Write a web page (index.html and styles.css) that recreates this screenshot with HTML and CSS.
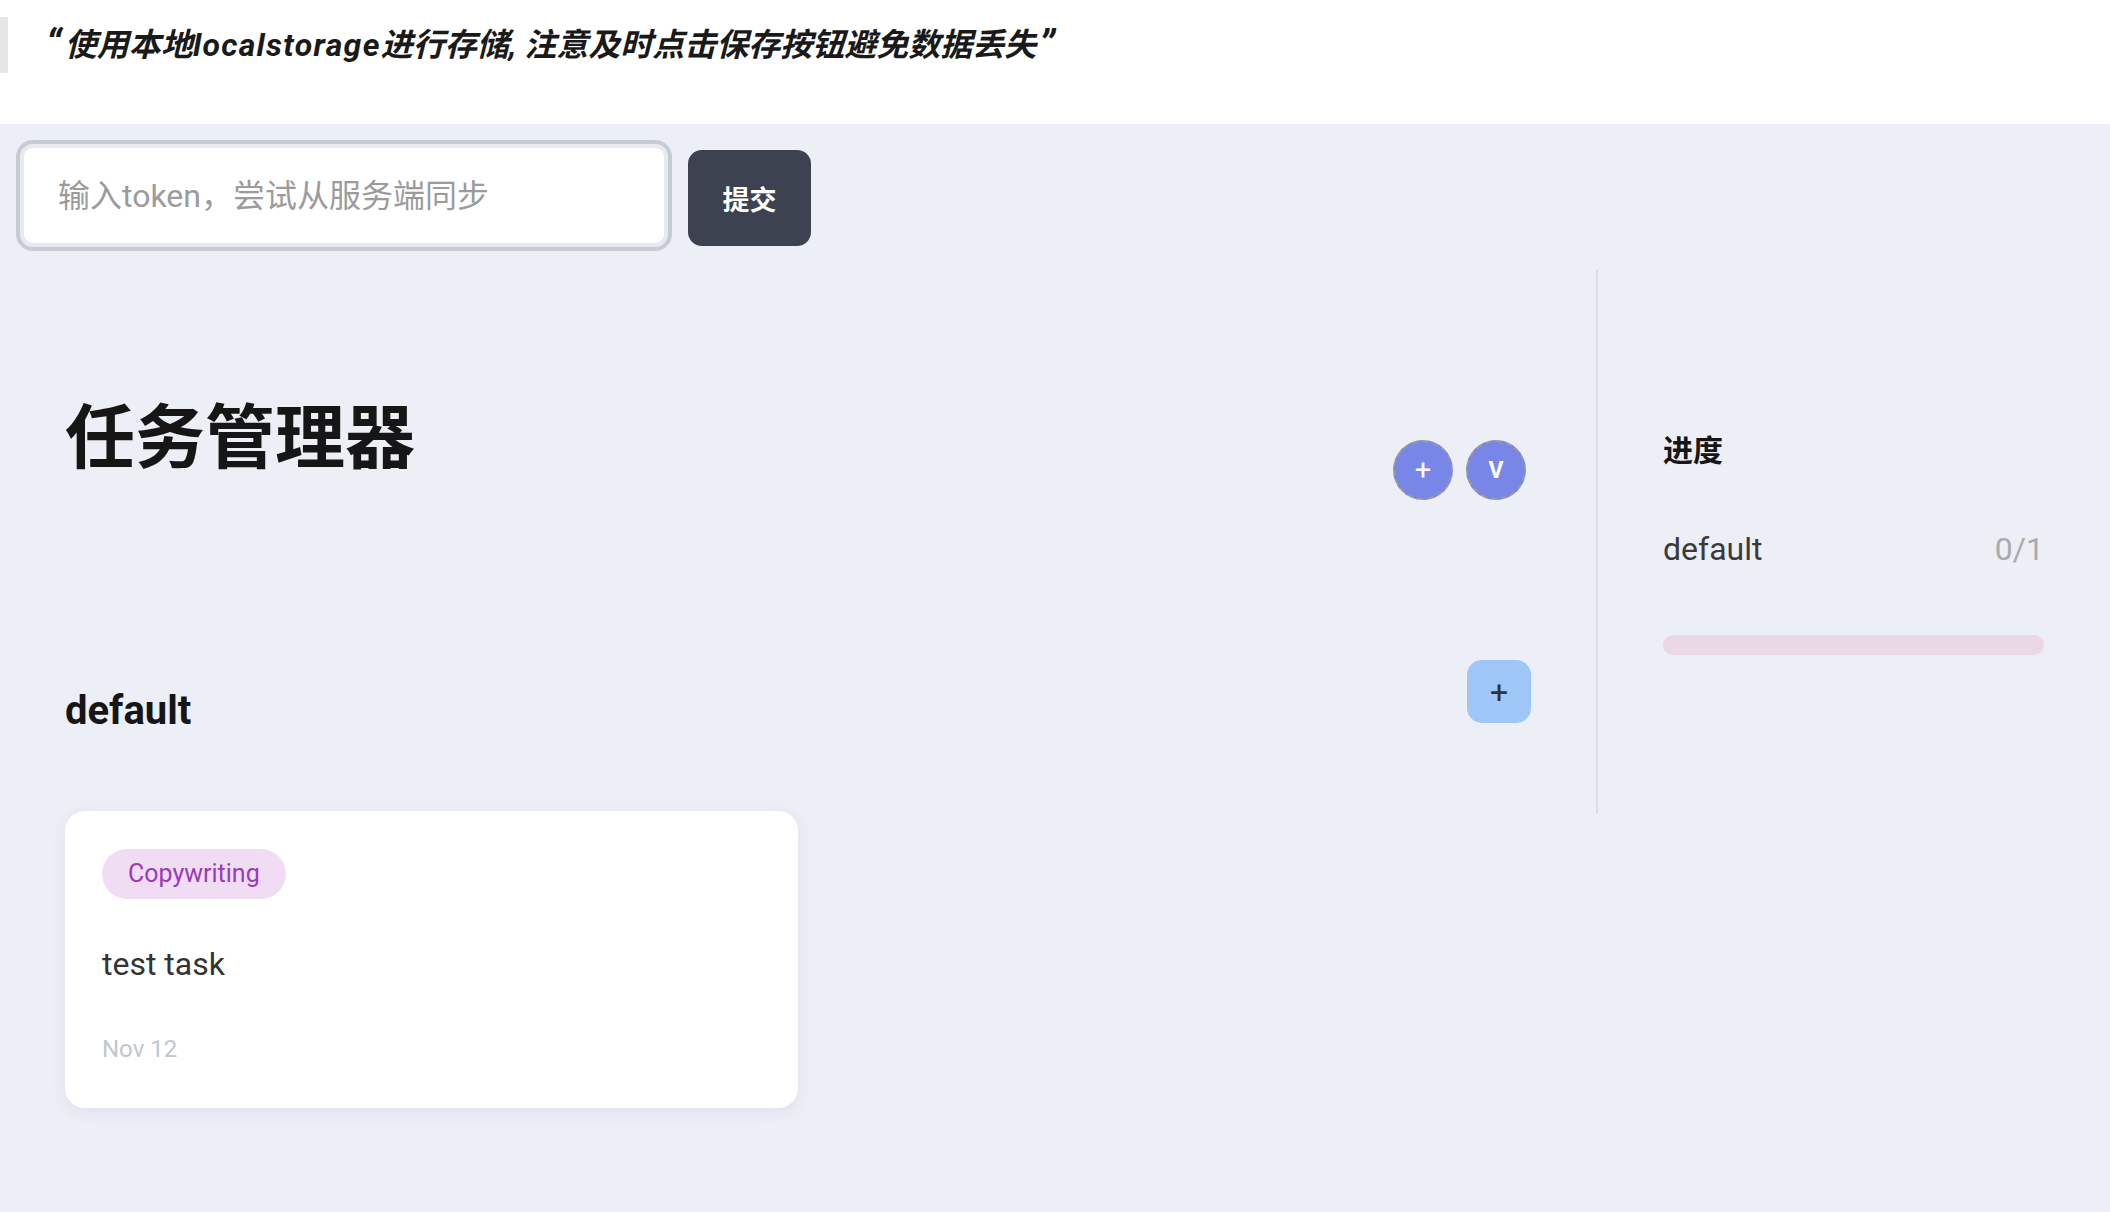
FILE: index.html
```html
<!DOCTYPE html>
<html lang="zh-CN">
<head>
<meta charset="utf-8">
<title>任务管理器</title>
<link rel="stylesheet" href="styles.css">
</head>
<body>
<header class="notice">
  <blockquote class="quote"><span class="q q-open">“</span>使用本地<span class="latin">localstorage</span>进行存储, 注意及时点击保存按钮避免数据丢失<span class="q q-close">”</span></blockquote>
</header>
<main class="app">
  <div class="sync">
    <input class="token-input" type="text" placeholder="输入token，尝试从服务端同步">
    <button class="submit" type="button">提交</button>
  </div>
  <div class="layout">
    <section class="board">
      <div class="board-head">
        <h1 class="title">任务管理器</h1>
        <div class="actions">
          <button class="circle circle-plus" type="button">+</button>
          <button class="circle" type="button">V</button>
        </div>
      </div>
      <div class="group-head">
        <h2 class="group-title">default</h2>
        <button class="add" type="button">+</button>
      </div>
      <div class="cards">
        <article class="card">
          <span class="tag">Copywriting</span>
          <p class="task">test task</p>
          <p class="date">Nov 12</p>
        </article>
      </div>
    </section>
    <aside class="progress">
      <h3 class="progress-title">进度</h3>
      <div class="progress-row">
        <span class="progress-name">default</span>
        <span class="progress-count">0/1</span>
      </div>
      <div class="bar"></div>
    </aside>
  </div>
</main>
</body>
</html>
```
FILE: styles.css
```css
* { box-sizing: border-box; }
html, body { margin: 0; padding: 0; }
body {
  font-family: Roboto, "Noto Sans CJK SC", sans-serif;
  background: #eceff6;
  color: #222;
  min-height: 1212px;
}
.notice {
  background: #fff;
  height: 124px;
  padding-top: 17px;
}
.quote {
  margin: 0;
  height: 56px;
  line-height: 56px;
  border-left: 8px solid #e6e6e6;
  padding-left: 32px;
  font-size: 32px;
  font-weight: 700;
  font-style: italic;
  color: #1a1a1a;
  white-space: nowrap;
}
.q {
  font-size: 40px;
  line-height: 0;
  vertical-align: -2px;
}
.q-open { margin-left: 6px; margin-right: 3px; }
.q-close { margin-left: 3px; }
.latin { letter-spacing: 1.3px; }
.app { background: #eceff6; }
.sync {
  display: flex;
  align-items: center;
  gap: 16px;
  padding: 16px 0 0 16px;
}
.token-input {
  width: 656px;
  height: 111px;
  border: 4px solid #c7cbd4;
  border-radius: 17px;
  box-shadow: inset 0 0 0 4px #e7eaf1;
  background: #fff;
  padding: 0 0 0 38px;
  font-family: Roboto, "Noto Sans CJK SC", sans-serif;
  font-size: 32px;
  color: #333;
  outline: none;
}
.token-input::placeholder { color: #9b9b9b; }
.submit {
  width: 123px;
  height: 96px;
  margin-top: 5px;
  border: none;
  border-radius: 14px;
  background: #3c4250;
  color: #fff;
  font-family: "Noto Sans CJK SC", sans-serif;
  font-size: 27px;
  font-weight: 700;
}
.layout {
  display: flex;
  margin-top: 19px;
}
.board {
  flex: 1;
  padding: 121px 65px 0 65px;
}
.board-head {
  display: flex;
  justify-content: space-between;
  align-items: flex-start;
}
.title {
  margin: 0;
  font-family: "Noto Sans CJK SC", sans-serif;
  font-size: 70px;
  line-height: 84px;
  font-weight: 700;
  color: #161616;
}
.actions {
  display: flex;
  gap: 13px;
  margin-top: 49px;
  margin-right: 5px;
}
.circle {
  width: 60px;
  height: 60px;
  border-radius: 50%;
  border: 2px dashed #9a9a9a;
  background: #7887e7;
  color: #fff;
  font-family: Roboto, sans-serif;
  font-size: 23px;
  font-weight: 700;
  padding: 0;
  display: flex;
  align-items: center;
  justify-content: center;
}
.circle-plus {
  font-size: 29px;
  font-weight: 400;
}
.group-head {
  display: flex;
  justify-content: space-between;
  align-items: flex-start;
  margin-top: 160px;
}
.group-title {
  margin: 27px 0 0 0;
  font-size: 40px;
  line-height: 48px;
  font-weight: 700;
  color: #161616;
}
.add {
  width: 64px;
  height: 63px;
  border: none;
  border-radius: 15px;
  background: #9ec7f7;
  color: #333;
  font-family: Roboto, sans-serif;
  font-size: 32px;
  font-weight: 400;
  padding: 0;
  display: flex;
  align-items: center;
  justify-content: center;
}
.cards {
  margin-top: 76px;
  display: flex;
}
.card {
  width: 733px;
  background: #fff;
  border-radius: 20px;
  box-shadow: 0 4px 16px rgba(40, 60, 110, 0.07);
  padding: 38px 37px 43px 37px;
}
.tag {
  display: inline-block;
  height: 50px;
  line-height: 50px;
  padding: 0 26px;
  border-radius: 25px;
  background: #f0dcf3;
  color: #9b3bb6;
  font-size: 25px;
}
.task {
  margin: 45px 0 0 0;
  font-size: 32px;
  line-height: 40px;
  color: #333;
}
.date {
  margin: 49px 0 0 0;
  font-size: 24px;
  line-height: 32px;
  color: #c2c6ce;
}
.progress {
  width: 514px;
  height: 544px;
  border-left: 2px solid #dadee7;
  padding: 158px 66px 0 65px;
}
.progress-title {
  margin: 0;
  font-family: "Noto Sans CJK SC", sans-serif;
  font-size: 30px;
  line-height: 40px;
  font-weight: 700;
  color: #161616;
}
.progress-row {
  display: flex;
  justify-content: space-between;
  margin-top: 61px;
  font-size: 32px;
  line-height: 40px;
}
.progress-name { color: #3a3a3a; }
.progress-count { color: #aaaaaa; }
.bar {
  margin-top: 66px;
  height: 20px;
  border-radius: 10px;
  background: #ead8e4;
}
```
